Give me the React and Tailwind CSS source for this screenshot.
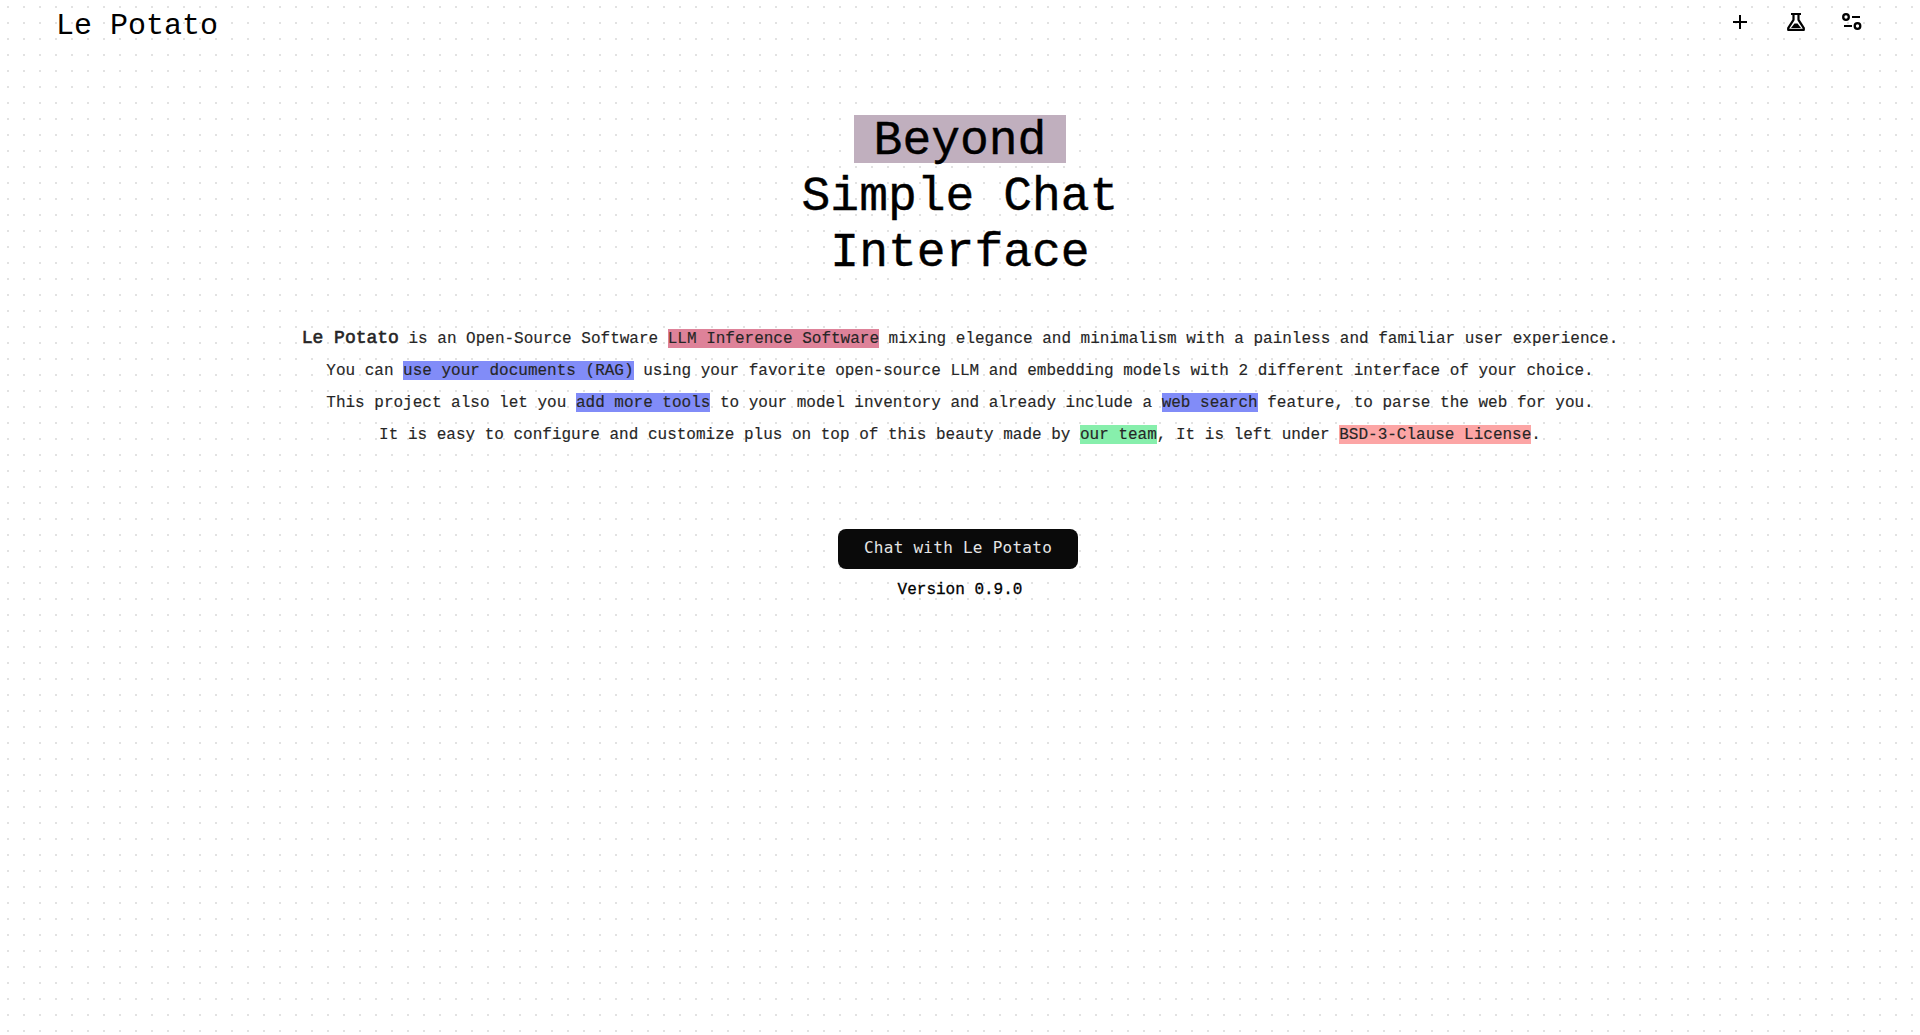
const Mark = ({ className, children }) => (
  <span className={`pt-px ${className}`}>{children}</span>
);

function PlusIcon() {
  return (
    <svg width="14" height="14" viewBox="0 0 14 14" fill="none" stroke="black" strokeWidth="2">
      <path d="M7 0v14M0 7h14" />
    </svg>
  );
}

function FlaskIcon() {
  return (
    <svg width="18" height="18" viewBox="0 0 18 18" fill="none" stroke="black" strokeWidth="2.200" strokeLinejoin="round">
      <path d="M4 1h10M6.500 1v5.800L1.200 15.200v1.700h15.600v-1.700L11.500 6.800V1" />
      <path d="M4 15 7.500 10.500h3L14 15z" fill="black" stroke="none" />
    </svg>
  );
}

function SlidersIcon() {
  return (
    <svg width="20" height="17" viewBox="0 0 20 17" fill="none" stroke="black" strokeWidth="2.300">
      <circle cx="4" cy="4" r="2.800" />
      <circle cx="15.500" cy="13" r="2.800" />
      <path d="M10 4h8M2 13h8" strokeWidth="2" />
    </svg>
  );
}

export default function App() {
  return (
    <div className="h-[1035px] w-full overflow-hidden bg-white bg-[linear-gradient(90deg,#fff_7px,transparent_7px,transparent_9px,#fff_9px),linear-gradient(#fff_6px,#e2e2e2_6px,#e2e2e2_8px,#fff_8px)] bg-[length:16px_16px] font-['Liberation_Mono',monospace] text-black">
      <header className="flex h-12 items-start justify-between pr-[58px] pl-[56px]">
        <div className="pt-2 text-[30px] leading-9 whitespace-pre">Le Potato</div>
        <nav className="flex items-start">
          <button className="mt-[15px] mr-[40px]"><PlusIcon /></button>
          <button className="mt-[13px] mr-[37px]"><FlaskIcon /></button>
          <button className="mt-[13px]"><SlidersIcon /></button>
        </nav>
      </header>
      <main className="flex flex-col items-center pt-[65px] text-center">
        <h1 className="text-5xl leading-[56px] [-webkit-text-stroke:0.4px_black]">
          <div className="flex h-14 items-center justify-center pb-1">
            <span className="h-12 bg-[#c0afbe] px-5 leading-[52px]">Beyond</span>
          </div>
          <div>Simple Chat</div>
          <div>Interface</div>
        </h1>
        <div className="mt-[41px] text-base leading-8 whitespace-nowrap text-neutral-800 [-webkit-text-stroke:0.15px]">
          <p className="h-[33px]">
            <span className="text-lg leading-8 [-webkit-text-stroke:0.600px]">Le Potato</span> is an Open-Source Software{" "}
            <Mark className="bg-[#de8299]">LLM Inference Software</Mark> mixing elegance and minimalism with a painless and familiar user experience.
          </p>
          <p className="h-8">
            You can <Mark className="bg-[#818cf8]">use your documents (RAG)</Mark> using your favorite open-source LLM and embedding models with 2 different interface of your choice.
          </p>
          <p className="h-8">
            This project also let you <Mark className="bg-[#818cf8]">add more tools</Mark> to your model inventory and already include a{" "}
            <Mark className="bg-[#818cf8]">web search</Mark> feature, to parse the web for you.
          </p>
          <p className="h-8">
            It is easy to configure and customize plus on top of this beauty made by <Mark className="bg-[#87efac]">our team</Mark>, It is left under{" "}
            <Mark className="bg-[#fca5a5]">BSD-3-Clause License</Mark>.
          </p>
        </div>
        <button className="mt-[78px] mr-1 flex h-10 w-60 items-center justify-center rounded-lg bg-neutral-950 pb-[3px] font-['DejaVu_Sans_Mono',monospace] text-[16px] tracking-[0.270px] text-neutral-200">
          Chat with Le Potato
        </button>
        <p className="mt-[9px] text-base leading-6 [-webkit-text-stroke:0.3px_black]">Version 0.9.0</p>
      </main>
    </div>
  );
}
